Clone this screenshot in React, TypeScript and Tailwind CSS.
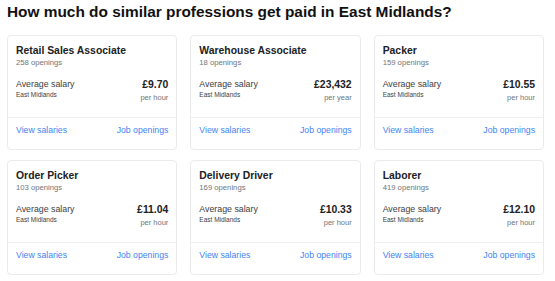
import React from "react";

const jobs = [
  { title: "Retail Sales Associate", openings: "258 openings", salary: "£9.70", period: "per hour" },
  { title: "Warehouse Associate", openings: "18 openings", salary: "£23,432", period: "per year" },
  { title: "Packer", openings: "159 openings", salary: "£10.55", period: "per hour" },
  { title: "Order Picker", openings: "103 openings", salary: "£11.04", period: "per hour" },
  { title: "Delivery Driver", openings: "169 openings", salary: "£10.33", period: "per hour" },
  { title: "Laborer", openings: "419 openings", salary: "£12.10", period: "per hour" },
];

export default function App() {
  return (
    <div className="w-[555px] h-[281px] bg-white overflow-hidden" style={{ fontFamily: '"Liberation Sans", Arial, sans-serif' }}>
      <h1 className="pl-[7px] pt-[2px] text-[15.4px] leading-[20px] font-bold text-[#111]">
        How much do similar professions get paid in East Midlands?
      </h1>
      <div className="ml-[7px] mt-[13px] w-[537px] grid grid-cols-3 gap-x-[13px] gap-y-[10px]">
        {jobs.map((j) => (
          <div key={j.title} className="h-[115px] border border-[#ebebeb] rounded-[4px] flex flex-col">
            <div className="pl-[8px] pr-[8px] pt-[8px] h-[82px] border-b border-[#efefef]">
              <div className="text-[10.4px] leading-[14px] font-bold text-[#202124]">{j.title}</div>
              <div className="text-[7.7px] leading-[10px] text-[#70757a]">{j.openings}</div>
              <div className="mt-[11px] flex justify-between">
                <div>
                  <div className="text-[8.8px] leading-[11px] text-[#3c4043]">Average salary</div>
                  <div className="text-[6.5px] leading-[9px] text-[#3c4043]">East Midlands</div>
                </div>
                <div className="text-right">
                  <div className="text-[10.4px] leading-[12px] font-bold text-[#202124]">{j.salary}</div>
                  <div className="text-[7.5px] leading-[13px] text-[#70757a]">{j.period}</div>
                </div>
              </div>
            </div>
            <div className="pl-[8px] pr-[8px] pt-[7px] flex justify-between text-[8.7px] leading-[11px] text-[#4285f4]">
              <span>View salaries</span>
              <span>Job openings</span>
            </div>
          </div>
        ))}
      </div>
    </div>
  );
}
